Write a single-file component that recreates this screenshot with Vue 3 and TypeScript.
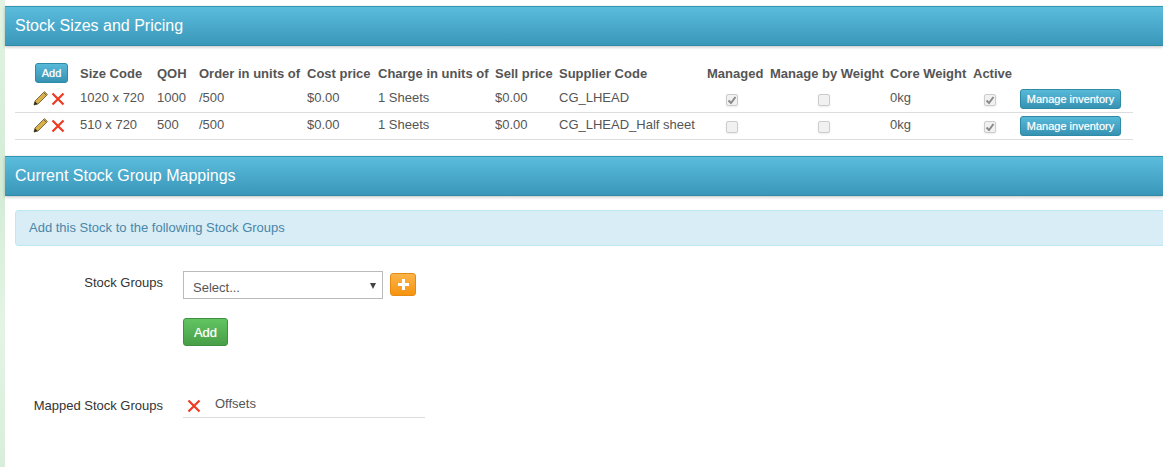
<script setup lang="ts">
interface StockRow {
  size: string
  qoh: number
  order: string
  cost: string
  charge: string
  sell: string
  supplier: string
  managed: boolean
  byWeight: boolean
  core: string
  active: boolean
}

const rows: StockRow[] = [
  { size: '1020 x 720', qoh: 1000, order: '/500', cost: '$0.00', charge: '1 Sheets', sell: '$0.00', supplier: 'CG_LHEAD', managed: true, byWeight: false, core: '0kg', active: true },
  { size: '510 x 720', qoh: 500, order: '/500', cost: '$0.00', charge: '1 Sheets', sell: '$0.00', supplier: 'CG_LHEAD_Half sheet', managed: false, byWeight: false, core: '0kg', active: true },
]
const colWidths = [62, 77, 42, 108, 71, 117, 64, 148, 63, 120, 83, 47, 116]
</script>

<template>
  <div class="page">
    <div class="strip"></div>
    <main class="content">
      <h2 class="bar first">Stock Sizes and Pricing</h2>
      <div class="table-wrap">
        <table class="stock">
          <colgroup>
            <col v-for="(w, i) in colWidths" :key="i" :style="{ width: w + 'px' }" />
          </colgroup>
          <thead>
            <tr>
              <th class="add-cell"><button class="btn-blue small">Add</button></th>
              <th>Size Code</th>
              <th>QOH</th>
              <th>Order in units of</th>
              <th>Cost price</th>
              <th>Charge in units of</th>
              <th>Sell price</th>
              <th>Supplier Code</th>
              <th>Managed</th>
              <th>Manage by Weight</th>
              <th>Core Weight</th>
              <th>Active</th>
              <th></th>
            </tr>
          </thead>
          <tbody>
            <tr v-for="r in rows" :key="r.size">
              <td class="actions">
                <svg class="pencil" width="15" height="15" viewBox="0 0 15 15">
                  <path d="M1 14l1-4 8.500-8.500 3 3L5 13z" fill="#d8b04a" stroke="#5f5330" stroke-width=".8" />
                  <path d="M10.500 1.500l1-1 3 3-1 1z" fill="#c9a24a" stroke="#5f5330" stroke-width=".6" />
                  <path d="M1 14l1-3.500 2.500 2.500z" fill="#222" />
                </svg>
                <svg class="cross" width="14" height="14" viewBox="0 0 14 14">
                  <path d="M1.500 1.500l11 11M12.500 1.500l-11 11" stroke="#ee3a22" stroke-width="2.200" fill="none" />
                </svg>
              </td>
              <td>{{ r.size }}</td>
              <td>{{ r.qoh }}</td>
              <td>{{ r.order }}</td>
              <td>{{ r.cost }}</td>
              <td>{{ r.charge }}</td>
              <td>{{ r.sell }}</td>
              <td>{{ r.supplier }}</td>
              <td class="check-cell">
                <span class="check">
                  <svg v-if="r.managed" width="10" height="10" viewBox="0 0 10 10"><path d="M1.500 5.500l2.500 2.500 4.500-6" stroke="#8a8a8a" stroke-width="2" fill="none" /></svg>
                </span>
              </td>
              <td class="check-cell weight">
                <span class="check">
                  <svg v-if="r.byWeight" width="10" height="10" viewBox="0 0 10 10"><path d="M1.500 5.500l2.500 2.500 4.500-6" stroke="#8a8a8a" stroke-width="2" fill="none" /></svg>
                </span>
              </td>
              <td>{{ r.core }}</td>
              <td class="check-cell active">
                <span class="check">
                  <svg v-if="r.active" width="10" height="10" viewBox="0 0 10 10"><path d="M1.500 5.500l2.500 2.500 4.500-6" stroke="#8a8a8a" stroke-width="2" fill="none" /></svg>
                </span>
              </td>
              <td class="manage-cell"><button class="btn-blue manage">Manage inventory</button></td>
            </tr>
          </tbody>
        </table>
      </div>

      <h2 class="bar">Current Stock Group Mappings</h2>
      <div class="alert">Add this Stock to the following Stock Groups</div>

      <div class="form">
        <label class="lbl">Stock Groups</label>
        <div class="field">
          <div class="select">
            <span>Select...</span>
            <i class="caret"></i>
          </div>
          <button class="btn-plus" aria-label="Add group">
            <svg width="13" height="13" viewBox="0 0 13 13"><path d="M6.500 1v11M1 6.500h11" stroke="#fff" stroke-width="3" /></svg>
          </button>
        </div>
        <div></div>
        <button class="btn-green">Add</button>
      </div>

      <div class="mapped">
        <span class="lbl">Mapped Stock Groups</span>
        <div class="mapped-row">
          <svg class="cross" width="14" height="14" viewBox="0 0 14 14">
            <path d="M1.500 1.500l11 11M12.500 1.500l-11 11" stroke="#ee3a22" stroke-width="2.200" fill="none" />
          </svg>
          <span class="mapped-name">Offsets</span>
        </div>
      </div>
    </main>
  </div>
</template>

<style>
html, body { background: #fff; }
</style>

<style scoped>
.page { display: flex; width: 1163px; height: 467px; overflow: hidden; font-family: "Liberation Sans", Arial, sans-serif; font-size: 13px; color: #555; }
.strip { width: 5px; flex: none; background: linear-gradient(180deg, #e2f3e2, #d3ecd6 40%, #e4f4e4 70%, #d8eeda); }
.content { flex: 1; min-width: 0; }

.bar { margin: 0; height: 40px; line-height: 37px; padding-left: 10px; font-size: 16px; font-weight: normal; color: #fff; box-sizing: border-box; border-top: 1px solid #2f96b4; border-bottom: 1px solid #2f8aa6; background: linear-gradient(180deg, #5bbcdc, #3a97b9); box-shadow: 0 1px 3px rgba(0,0,0,.25); }
.bar.first { margin-top: 6px; }

.table-wrap { padding: 17px 0 16px 10px; }
.stock { table-layout: fixed; border-collapse: collapse; width: 1118px; font-size: 13px; }
.stock th { text-align: left; font-weight: bold; padding: 0 0 2px 3px; height: 21px; white-space: nowrap; font-size: 13px; color: #555; }
.stock td { padding: 0 0 3px 3px; height: 23px; border-bottom: 1px solid #ddd; white-space: nowrap; }
.stock th.add-cell { padding: 0 0 0 20px; vertical-align: top; }
.stock td.actions { padding: 0 0 2px 18px; }
.actions svg { vertical-align: middle; }
.pencil { margin-right: 3px; }
.stock td.check-cell { padding-left: 22px; }
.stock td.check-cell.weight { padding-left: 51px; }
.stock td.check-cell.active { padding-left: 14px; }
.check { display: inline-flex; align-items: center; justify-content: center; width: 12px; height: 12px; box-sizing: border-box; margin-top: 3px; border: 1px solid #ccc; border-radius: 2px; background: #f1f1f1; box-shadow: 0 1px 2px rgba(0,0,0,.08); vertical-align: middle; }
.stock td.manage-cell { padding: 3px 0 0 3px; vertical-align: top; }

button { font-family: inherit; cursor: pointer; }
.btn-blue { display: block; color: #fff; border: 1px solid #2f8aa6; border-radius: 3px; background: linear-gradient(180deg, #58b9d8, #3692b3); font-weight: normal; padding: 0; text-shadow: 0 0 1px rgba(255,255,255,.6); }
.btn-blue.small { width: 33px; height: 20px; font-size: 11px; }
.btn-blue.manage { width: 101px; height: 20px; font-size: 11px; }

.alert { margin: 14px 0 0 10px; height: 36px; line-height: 33px; box-sizing: border-box; padding-left: 13px; font-size: 13px; color: #4a86a8; background: #d9edf7; border: 1px solid #bce8f1; border-right: 0; border-radius: 4px 0 0 4px; }

.form { display: grid; grid-template-columns: 158px 1fr; column-gap: 20px; row-gap: 19px; margin-top: 25px; align-items: start; }
.lbl { text-align: right; color: #333; font-size: 13px; padding-top: 4px; }
.form .lbl { display: block; }
.field { display: flex; align-items: center; gap: 7px; }
.select { width: 200px; height: 28px; box-sizing: border-box; border: 1px solid #bbb; background: #fff; padding: 4px 9px 0; color: #555; display: flex; justify-content: space-between; align-items: center; }
.caret { width: 0; height: 0; margin-top: -2px; border-left: 3.500px solid transparent; border-right: 3.500px solid transparent; border-top: 6px solid #444; margin-right: -3px; }
.btn-plus { width: 26px; height: 23px; margin-top: -2px; padding: 0; display: flex; align-items: center; justify-content: center; border: 1px solid #e58a13; border-radius: 3px; background: linear-gradient(180deg, #fbb44a, #f7940f); }
.btn-green { justify-self: start; width: 45px; height: 28px; padding: 0; font-size: 13px; font-weight: normal; color: #fff; border: 1px solid #3f8f3f; border-radius: 3px; background: linear-gradient(180deg, #62c462, #479f47); text-shadow: 0 0 1px rgba(255,255,255,.6); }

.mapped { display: grid; grid-template-columns: 158px 242px; column-gap: 20px; margin-top: 45px; }
.mapped .lbl { padding-top: 7px; }
.mapped-row { display: flex; align-items: flex-start; height: 27px; border-bottom: 1px solid #ddd; padding: 5px 0 0 4px; box-sizing: border-box; }
.mapped-row .cross { margin-top: 3px; }
.mapped-name { margin-left: 14px; color: #555; }
</style>
